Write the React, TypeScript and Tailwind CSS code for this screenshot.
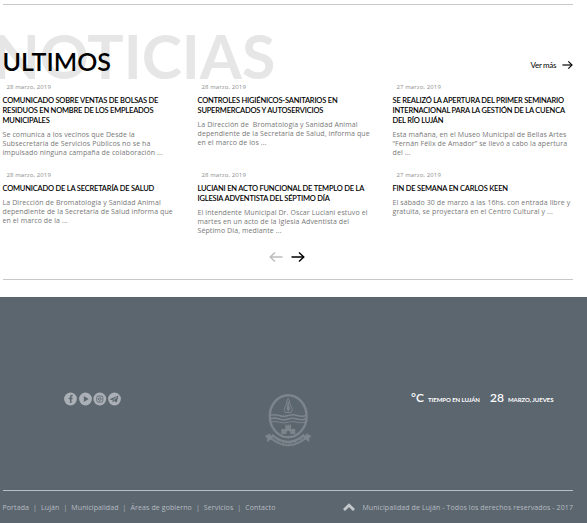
import React from "react";

type Article = { date: string; title: string[]; body: string[] };

const articles: Article[] = [
  {
    date: "28 marzo, 2019",
    title: ["COMUNICADO SOBRE VENTAS DE BOLSAS DE", "RESIDUOS EN NOMBRE DE LOS EMPLEADOS", "MUNICIPALES"],
    body: ["Se comunica a los vecinos que Desde la", "Subsecretaría de Servicios Públicos no se ha", "impulsado ninguna campaña de colaboración ..."],
  },
  {
    date: "28 marzo, 2019",
    title: ["CONTROLES HIGIÉNICOS-SANITARIOS EN", "SUPERMERCADOS Y AUTOSERVICIOS"],
    body: ["La Dirección de  Bromatología y Sanidad Animal", "dependiente de la Secretaria de Salud, informa que", "en el marco de los ..."],
  },
  {
    date: "27 marzo, 2019",
    title: ["SE REALIZÓ LA APERTURA DEL PRIMER SEMINARIO", "INTERNACIONAL PARA LA GESTIÓN DE LA CUENCA", "DEL RÍO LUJÁN"],
    body: ["Esta mañana, en el Museo Municipal de Bellas Artes", "“Fernán Félix de Amador” se llevó a cabo la apertura", "del ..."],
  },
  {
    date: "28 marzo, 2019",
    title: ["COMUNICADO DE LA SECRETARÍA DE SALUD"],
    body: ["La Dirección de Bromatología y Sanidad Animal", "dependiente de la Secretaria de Salud informa que", "en el marco de la ..."],
  },
  {
    date: "28 marzo, 2019",
    title: ["LUCIANI EN ACTO FUNCIONAL DE TEMPLO DE LA", "IGLESIA ADVENTISTA DEL SÉPTIMO DÍA"],
    body: ["El intendente Municipal Dr. Oscar Luciani estuvo el", "martes en un acto de la Iglesia Adventista del", "Séptimo Día, mediante ..."],
  },
  {
    date: "27 marzo, 2019",
    title: ["FIN DE SEMANA EN CARLOS KEEN"],
    body: ["El sábado 30 de marzo a las 16hs. con entrada libre y", "gratuita, se proyectará en el Centro Cultural y ..."],
  },
];

const links = ["Portada", "Luján", "Municipalidad", "Áreas de gobierno", "Servicios", "Contacto"];

function Arrow({ className }: { className: string }) {
  return (
    <svg viewBox="0 0 14 12" className={className} fill="none" stroke="currentColor">
      <path d="M0.5 6H12.5" strokeWidth="1.5" />
      <path d="M8 1.5L12.8 6L8 10.5" strokeWidth="1.4" />
    </svg>
  );
}

function News({ date, title, body }: Article) {
  return (
    <article className="h-[88px] whitespace-pre">
      <p className="pl-[3.5px] text-[6px] leading-[9px] tracking-[0.1px] text-[#8c8c8c]">{date}</p>
      <h2 className="-ml-[0.5px] mt-1 font-['Lato',sans-serif] text-[7.5px] leading-[10px] font-semibold tracking-[-0.2px] text-black">
        {title.map((line) => <span key={line} className="block">{line}</span>)}
      </h2>
      <p className="-ml-[0.5px] mt-1 text-[7px] leading-[9px] tracking-[0.1px] text-[#777]">
        {body.map((line) => <span key={line} className="block">{line}</span>)}
      </p>
    </article>
  );
}

function SocialIcons() {
  return (
    <svg viewBox="0 0 58 14" className="h-[14px] w-[58px]" fill="none">
      <g fill="#aab0b5">
        <circle cx="6.5" cy="7" r="6.4" />
        <circle cx="21.5" cy="7" r="6.4" />
        <circle cx="35.8" cy="7" r="6.4" />
        <circle cx="50.5" cy="7" r="6.4" />
      </g>
      <path d="M8.7 3.6H7.8Q6.7 3.6 6.7 4.9V11M4.8 6.6H8.5" stroke="#5c666f" strokeWidth="1.5" />
      <path d="M19.8 4L24.7 7L19.8 10Z" fill="#5c666f" />
      <g stroke="#5c666f" strokeWidth="0.9">
        <rect x="32.8" y="4" width="6" height="6" rx="1.3" />
        <circle cx="35.8" cy="7" r="1.3" />
      </g>
      <path d="M45.5 7.3L54.4 3.4L52.8 10.6L50 8.9L48.8 10.4L48.4 8.3Z" fill="#5c666f" />
      <path d="M48.5 8.2L52.8 4.8L49.7 8.8" stroke="#aab0b5" strokeWidth="0.5" />
    </svg>
  );
}

function Crest() {
  return (
    <svg viewBox="0 0 48 56" className="h-14 w-12 text-[#7c848c]" fill="none" stroke="currentColor">
      <ellipse cx="24.2" cy="23.2" rx="18.4" ry="21" strokeWidth="2.4" />
      <path d="M24.2 5.5L25.6 8V10L28.4 16.5L27.3 19.5H21.1L20 16.5L22.8 10V8Z" strokeWidth="1" />
      <path d="M24.2 8L25.7 16L24.2 18.5L22.7 16Z" fill="currentColor" strokeWidth="0.5" />
      <g strokeWidth="1.6">
        <path d="M6 22.4Q10.5 21 15.2 22.6T24.2 22.6T33.2 22.6T42.4 22.2" />
        <path d="M6 25.8Q10.5 24.4 15.2 26T24.2 26T33.2 26T42.4 25.6" />
      </g>
      <path d="M7 29.2Q11 27.8 15.2 29.2T24.2 29.2T33.2 29.2T41.5 29" strokeWidth="1" />
      <path d="M17.3 36H21.4V31.5H22.7V32.8H23.6V31.5H24.8V32.8H25.7V31.5H27V36H31.3V41H26.2V39Q24.3 36.7 22.4 39V41H17.3Z" fill="currentColor" stroke="none" />
      <path d="M6 40.5L1 43L3.3 45.5L3 49L8.3 46ZM42.4 40.5L47.4 43L45.1 45.5L45.4 49L40.1 46Z" fill="currentColor" stroke="none" />
      <path d="M7 43Q24.2 58 41.4 43" strokeWidth="5.5" />
      <path d="M8.8 44.7Q24.2 57 39.6 44.7" stroke="#5c666f" strokeWidth="1.5" strokeDasharray="1 .5 .7 .4 1.2 .5 .8 1.2" />
    </svg>
  );
}

export default function App() {
  return (
    <div className="h-[523px] w-[587px] overflow-hidden bg-white font-['Open_Sans',sans-serif]">
      <main className="h-[297px] pt-1">
        <section className="ml-[3px] h-[276px] w-[570px] border-y border-[#c8c8c8]">
          <header className="relative flex h-[78px] items-start justify-between font-['Lato',sans-serif]">
            <span className="absolute top-[15px] left-[-10px] text-[60.7px] leading-[72px] font-bold text-[#e6e6e6]">NOTICIAS</span>
            <h1 className="relative mt-[41px] -ml-[0.5px] text-[25px] leading-[30px] font-semibold text-black">ULTIMOS</h1>
            <a className="mt-[54px] flex items-center gap-[6px] text-[8px] leading-[12px] tracking-[-0.35px] text-black">
              Ver más
              <Arrow className="h-[10px] w-[11px]" />
            </a>
          </header>
          <div className="grid grid-cols-[180px_180px_180px] gap-x-[15px]">
            {articles.map((article) => <News key={article.title[0]} {...article} />)}
          </div>
          <nav className="-mt-2 ml-[266px] flex gap-2">
            <Arrow className="h-3 w-[14px] rotate-180 text-[#bbb]" />
            <Arrow className="h-3 w-[14px] text-black" />
          </nav>
        </section>
      </main>
      <footer className="flex h-[226px] flex-col bg-[#5c666f]">
        <div className="grid h-[193px] grid-cols-[240px_96px_251px]">
          <div className="pt-[95px] pl-16"><SocialIcons /></div>
          <div className="flex justify-center pt-[96px]"><Crest /></div>
          <div className="flex items-baseline pt-[92px] pl-[75px] font-['Lato',sans-serif] whitespace-nowrap text-white">
            <span className="w-[17px] text-[12px] leading-[18px] font-semibold">°C</span>
            <span className="w-[62px] text-[6px] font-bold tracking-[-0.05px]">TIEMPO EN LUJÁN</span>
            <span className="w-[18px] text-[12px] font-semibold">28</span>
            <span className="text-[6px] font-bold tracking-[-0.05px]">MARZO, JUEVES</span>
          </div>
        </div>
        <div className="ml-[2.5px] flex h-[33px] w-[570.5px] items-center justify-between border-t border-[#b8bec3] pt-[2px] text-[7px] tracking-[0.1px] whitespace-nowrap text-[#b6bcc2]">
          <nav className="flex gap-1">
            {links.map((link, i) => (
              <React.Fragment key={link}>
                {i > 0 && <span>|</span>}
                <a>{link}</a>
              </React.Fragment>
            ))}
          </nav>
          <div className="flex items-center gap-[7px]">
            <svg viewBox="0 0 12 8" className="-mt-[3px] h-2 w-3" fill="none" stroke="#c3c8cc" strokeWidth="2.8">
              <path d="M1 7L6 2.2L11 7" />
            </svg>
            <span>Municipalidad de Luján - Todos los derechos reservados - 2017</span>
          </div>
        </div>
      </footer>
    </div>
  );
}
